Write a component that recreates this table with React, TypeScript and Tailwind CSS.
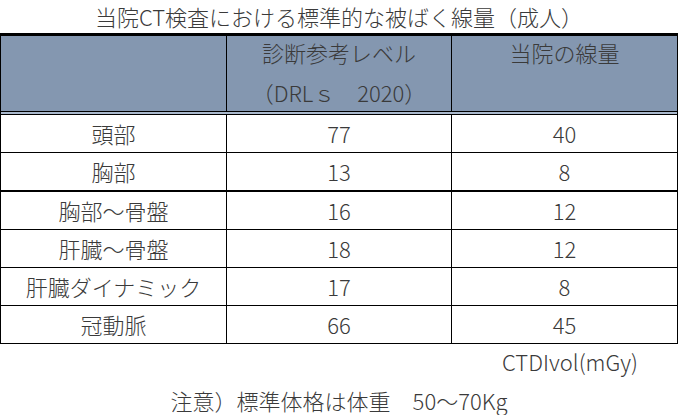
const rows = [
  { part: '頭部', drl: '77', ours: '40', thick: false },
  { part: '胸部', drl: '13', ours: '8', thick: true },
  { part: '胸部～骨盤', drl: '16', ours: '12', thick: false },
  { part: '肝臓～骨盤', drl: '18', ours: '12', thick: false },
  { part: '肝臓ダイナミック', drl: '17', ours: '8', thick: false },
  { part: '冠動脈', drl: '66', ours: '45', thick: false },
]

export default function App() {
  return (
    <div
      className="w-[678px] h-[415px] overflow-hidden bg-white text-[#3a3a3a] font-light"
      style={{ fontFamily: '"Noto Sans CJK JP", "Noto Sans", sans-serif' }}
    >
      {/* タイトル */}
      <div className="h-[33px] text-center text-[22px] leading-[33px]">
        当院CT検査における標準的な被ばく線量（成人）
      </div>

      {/* 表 */}
      <div className="border-t-[3px] border-x border-black">
        <div className="grid grid-cols-[226px_225px_1fr] h-[75px] bg-[#8497b0] text-[22px] text-center">
          <div className="border-r border-black" />
          <div className="border-r border-black">
            <div className="leading-[22px] pt-[5px]">診断参考レベル</div>
            <div className="leading-[22px] mt-[18px]">（DRLｓ　2020）</div>
          </div>
          <div>
            <div className="leading-[22px] pt-[5px]">当院の線量</div>
          </div>
        </div>
        <div className="h-[4px] border-y border-black bg-[#aab9cd]" />

        {rows.map((r) => (
          <div
            key={r.part}
            className={`grid grid-cols-[226px_225px_1fr] text-[22px] text-center leading-[37px] border-black ${
              r.thick ? 'border-b-2' : 'border-b'
            }`}
          >
            <div className="border-r border-black">{r.part}</div>
            <div className="border-r border-black">{r.drl}</div>
            <div>{r.ours}</div>
          </div>
        ))}
      </div>

      <div className="h-[34px] leading-[34px] text-right pr-[40px] text-[22px]">CTDIvol(mGy)</div>
      <div className="pt-[7px] leading-[30px] text-center text-[22px]">注意）標準体格は体重　50～70Kg</div>
    </div>
  )
}
